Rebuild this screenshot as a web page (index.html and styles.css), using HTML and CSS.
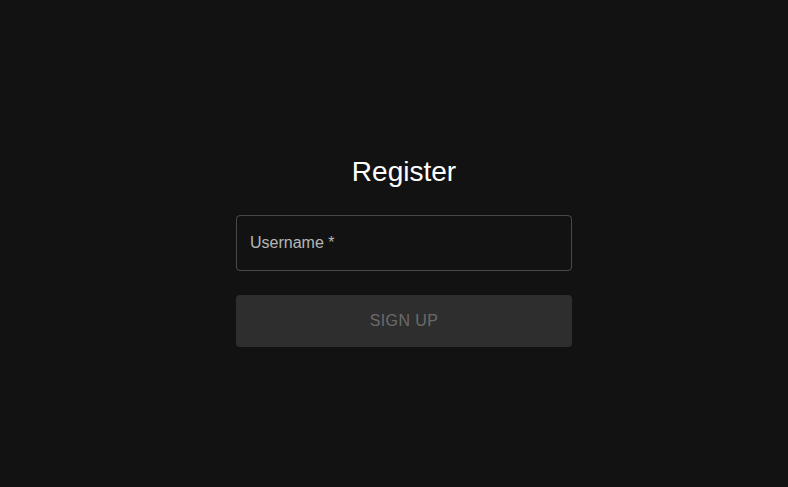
FILE: index.html
```html
<!DOCTYPE html>
<html>
<head>
<meta charset="utf-8">
<link rel="stylesheet" href="styles.css">
</head>
<body>
<main class="page">
  <div class="form">
    <h1 class="title">Register</h1>
    <div class="field">
      <span class="label">Username *</span>
    </div>
    <button class="btn" disabled>SIGN UP</button>
  </div>
</main>
</body>
</html>
```
FILE: styles.css
```css
html, body {
  margin: 0;
  padding: 0;
  background: #121212;
  height: 100%;
}
body {
  font-family: "Liberation Sans", Arial, sans-serif;
}
.page {
  display: flex;
  justify-content: center;
  padding-left: 20px;
  padding-top: 155px;
}
.form {
  width: 336px;
  display: flex;
  flex-direction: column;
}
.title {
  margin: 0 0 26px;
  font-weight: 400;
  font-size: 28px;
  line-height: 34px;
  color: #ffffff;
  text-align: center;
}
.field {
  box-sizing: border-box;
  height: 56px;
  border: 1px solid rgba(255,255,255,0.23);
  border-radius: 4px;
  display: flex;
  align-items: center;
  padding-left: 13px;
}
.label {
  font-size: 16px;
  color: rgba(255,255,255,0.7);
}
.btn {
  margin-top: 24px;
  height: 52px;
  border: 0;
  border-radius: 4px;
  background: rgba(255,255,255,0.12);
  color: rgba(255,255,255,0.3);
  font-family: "Liberation Sans", Arial, sans-serif;
  font-size: 16px;
  letter-spacing: 0.4px;
  padding: 0;
}
```
